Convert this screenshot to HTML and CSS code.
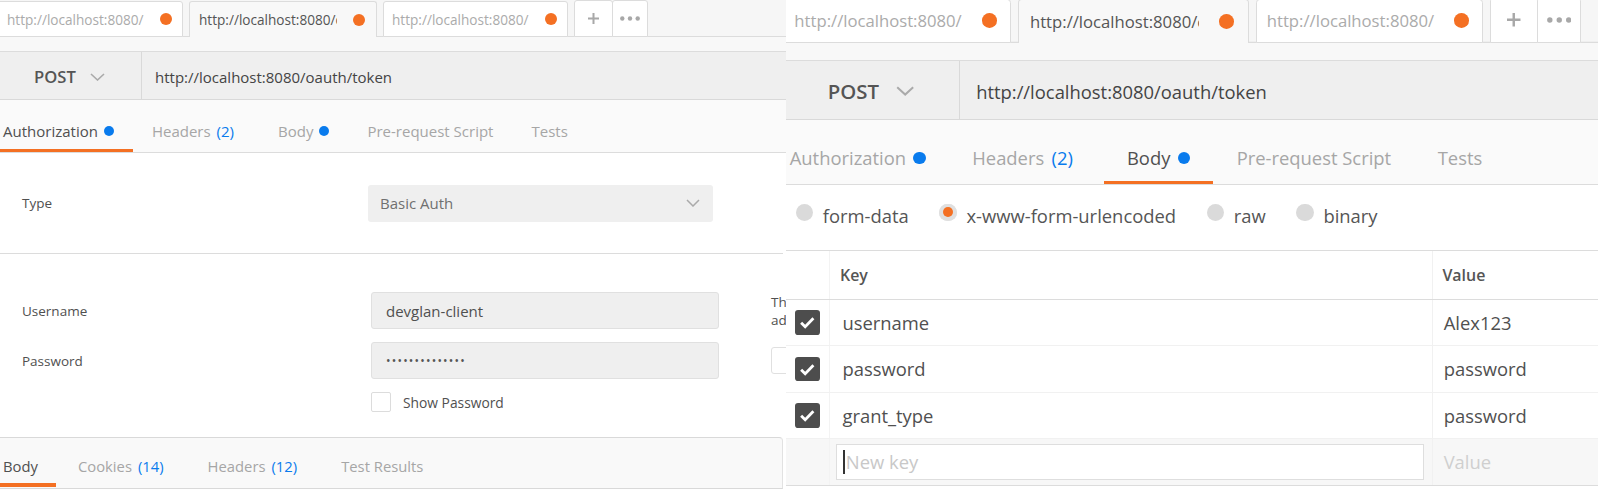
FILE: index.html
```html
<!DOCTYPE html>
<html>
<head>
<meta charset="utf-8">
<link rel="stylesheet" href="styles.css">
</head>
<body>
<div class="pm pm-left">
  <div class="tabbar">
    <div class="tab tab-first"><span class="tab-title">http://localhost:8080/</span><span class="tab-dot"></span></div>
    <div class="tab tab-active"><span class="tab-title">http://localhost:8080/oauth</span><span class="tab-dot"></span></div>
    <div class="tab tab-last"><span class="tab-title">http://localhost:8080/</span><span class="tab-dot"></span></div>
    <div class="tab-btn tab-plus"><svg width="11" height="11" viewBox="0 0 11 11"><path d="M5.5 0v11M0 5.5h11" stroke="#a8a8a8" stroke-width="2"/></svg></div>
    <div class="tab-btn tab-more"><svg width="20" height="5" viewBox="0 0 20 5"><circle cx="2.3" cy="2.5" r="2.2" fill="#a8a8a8"/><circle cx="10" cy="2.5" r="2.2" fill="#a8a8a8"/><circle cx="17.7" cy="2.5" r="2.2" fill="#a8a8a8"/></svg></div>
    <div class="tabbar-fill"></div>
  </div>
  <div class="band"></div>
  <div class="urlbar">
    <div class="method"><span class="method-name">POST</span><svg class="chev" width="15" height="8" viewBox="0 0 15 8"><path d="M1 1l6.5 6 6.5-6" fill="none" stroke="#aaa" stroke-width="1.6"/></svg></div>
    <div class="url">http://localhost:8080/oauth/token</div>
  </div>
  <div class="reqtabs">
    <div class="rt rt-first rt-active">Authorization<span class="bdot"></span></div>
    <div class="rt rt-headers">Headers<span class="count">(2)</span></div>
    <div class="rt">Body<span class="bdot"></span></div>
    <div class="rt">Pre-request Script</div>
    <div class="rt">Tests</div>
  </div>
  <div class="auth-type">
    <div class="lbl">Type</div>
    <div class="select">Basic Auth<svg class="chev" width="14" height="8" viewBox="0 0 14 8"><path d="M1 1l6 6 6-6" fill="none" stroke="#aaa" stroke-width="1.5"/></svg></div>
  </div>
  <div class="auth-fields">
    <div class="lbl">Username</div>
    <div class="input">devglan-client</div>
    <div class="help">Th<br>ad</div>
    <div class="lbl">Password</div>
    <div class="input input-pw">••••••••••••••</div>
    <div class="help"><span class="help-box"></span></div>
    <div></div>
    <div class="show-pw"><span class="cbox"></span>Show Password</div>
    <div></div>
  </div>
  <div class="resptabs">
    <div class="rs rs-first rs-active">Body</div>
    <div class="rs">Cookies<span class="count">(14)</span></div>
    <div class="rs">Headers<span class="count">(12)</span></div>
    <div class="rs">Test Results</div>
  </div>
</div>

<div class="pm pm-right">
  <div class="tabbar">
    <div class="tab tab-first"><span class="tab-title">http://localhost:8080/</span><span class="tab-dot"></span></div>
    <div class="tab tab-active"><span class="tab-title">http://localhost:8080/oauth</span><span class="tab-dot"></span></div>
    <div class="tab tab-last"><span class="tab-title">http://localhost:8080/</span><span class="tab-dot"></span></div>
    <div class="tab-btn tab-plus"><svg width="11" height="11" viewBox="0 0 11 11"><path d="M5.5 0v11M0 5.5h11" stroke="#a8a8a8" stroke-width="2"/></svg></div>
    <div class="tab-btn tab-more"><svg width="20" height="5" viewBox="0 0 20 5"><circle cx="2.3" cy="2.5" r="2.2" fill="#a8a8a8"/><circle cx="10" cy="2.5" r="2.2" fill="#a8a8a8"/><circle cx="17.7" cy="2.5" r="2.2" fill="#a8a8a8"/></svg></div>
    <div class="tabbar-fill"></div>
  </div>
  <div class="band"></div>
  <div class="urlbar">
    <div class="method"><span class="method-name">POST</span><svg class="chev" width="15" height="8" viewBox="0 0 15 8"><path d="M1 1l6.5 6 6.5-6" fill="none" stroke="#aaa" stroke-width="1.6"/></svg></div>
    <div class="url">http://localhost:8080/oauth/token</div>
  </div>
  <div class="reqtabs">
    <div class="rt rt-first">Authorization<span class="bdot"></span></div>
    <div class="rt rt-headers">Headers<span class="count">(2)</span></div>
    <div class="rt rt-active">Body<span class="bdot"></span></div>
    <div class="rt">Pre-request Script</div>
    <div class="rt">Tests</div>
  </div>
  <div class="modes">
    <div class="mode"><span class="radio"></span>form-data</div>
    <div class="mode"><span class="radio radio-on"></span>x-www-form-urlencoded</div>
    <div class="mode"><span class="radio"></span>raw</div>
    <div class="mode"><span class="radio"></span>binary</div>
  </div>
  <div class="kv">
    <div class="kv-row kv-head">
      <div class="kv-chk"></div>
      <div class="kv-key">Key</div>
      <div class="kv-val">Value</div>
    </div>
    <div class="kv-row">
      <div class="kv-chk"><span class="chk"><svg width="20" height="20" viewBox="0 0 20 20"><path d="M5 10.3l3.3 3.3L15 6.8" fill="none" stroke="#fff" stroke-width="2.3"/></svg></span></div>
      <div class="kv-key">username</div>
      <div class="kv-val">Alex123</div>
    </div>
    <div class="kv-row">
      <div class="kv-chk"><span class="chk"><svg width="20" height="20" viewBox="0 0 20 20"><path d="M5 10.3l3.3 3.3L15 6.8" fill="none" stroke="#fff" stroke-width="2.3"/></svg></span></div>
      <div class="kv-key">password</div>
      <div class="kv-val">password</div>
    </div>
    <div class="kv-row">
      <div class="kv-chk"><span class="chk"><svg width="20" height="20" viewBox="0 0 20 20"><path d="M5 10.3l3.3 3.3L15 6.8" fill="none" stroke="#fff" stroke-width="2.3"/></svg></span></div>
      <div class="kv-key">grant_type</div>
      <div class="kv-val">password</div>
    </div>
    <div class="kv-row kv-new">
      <div class="kv-chk"></div>
      <div class="kv-key"><div class="new-input"><span class="caret"></span>New key</div></div>
      <div class="kv-val kv-ph">Value</div>
    </div>
  </div>
</div>
</body>
</html>
```

FILE: styles.css
```css
* { box-sizing: border-box; }
html, body { margin: 0; padding: 0; }
body {
  display: flex;
  width: 1598px;
  height: 491px;
  overflow: hidden;
  background: #fff;
  font-family: "Open Sans", "Liberation Sans", sans-serif;
  color: #505050;
}
.pm { flex: none; overflow: hidden; height: 491px; background: #fff; }
.pm-left { width: 786px; }
.pm-right { width: 662px; height: 403px; zoom: 1.227; margin-top: -2.1px; }

/* top tabs */
.tabbar {
  display: flex;
  height: 37px;
  background: #f6f6f6;
  box-shadow: inset 0 -1px 0 #dcdcdc;
}
.tab {
  flex: none;
  display: flex;
  align-items: center;
  width: 188px;
  height: 36px;
  margin-top: 1px;
  margin-right: 6px;
  padding: 0 10px 0 11px;
  background: #fff;
  border: 1px solid #dcdcdc;
  border-radius: 3px 3px 0 0;
}
.tab-first { margin-left: -5px; }
.tab-active { background: #f8f8f8; border-bottom: none; padding: 0 11px 0 9px; }
.tab-last { width: 185px; padding: 0 10px 0 8px; }
.tab-title {
  width: 137px;
  overflow: hidden;
  white-space: nowrap;
  font-size: 13.6px;
  color: #ababab;
  margin-right: 16px;
}
.tab-active .tab-title { width: 138px; margin-right: 16px; color: #555; }
.tab-dot {
  width: 12px; height: 12px;
  border-radius: 50%;
  background: #f47023;
}
.tab-btn {
  flex: none;
  height: 37px;
  display: flex;
  align-items: center;
  justify-content: center;
  background: #fff;
  border: 1px solid #dcdcdc;
  border-radius: 3px 3px 0 0;
}
.tab-plus { width: 39px; }
.tab-more { width: 36px; margin-left: -1px; }
.tabbar-fill { flex: 1; }

.band { height: 15px; background: #f8f8f8; border-bottom: 1px solid #dcdcdc; }

/* url bar */
.urlbar {
  display: flex;
  height: 48px;
  background: #efefef;
  border-bottom: 1px solid #d9d9d9;
}
.method {
  width: 142px;
  flex: none;
  display: flex;
  align-items: center;
  padding-left: 34px;
  padding-top: 2px;
  border-right: 1px solid #d9d9d9;
}
.method-name { font-size: 16.6px; font-weight: 600; color: #555; margin-right: 14px; }
.url { display: flex; align-items: center; padding-left: 13px; padding-top: 2px; font-size: 15px; color: #444; }

/* request tabs */
.reqtabs {
  display: flex;
  height: 53px;
  background: #fafafa;
  border-bottom: 1px solid #dcdcdc;
}
.rt {
  display: flex;
  align-items: center;
  padding: 12px 19px 0;
  font-size: 15px;
  color: #a6a6a6;
  border-bottom: 3px solid transparent;
}
.rt-first { padding-left: 3px; }
.rt-headers { padding-right: 25px; }
.rt-active { color: #505050; border-bottom-color: #f47023; }
.bdot { width: 10px; height: 10px; border-radius: 50%; background: #097bed; margin-left: 6px; }
.count { color: #097bed; margin-left: 6px; }

/* auth */
.lbl { font-size: 13.5px; color: #505050; }
.auth-type {
  display: flex;
  align-items: center;
  height: 101px;
  padding-left: 22px;
  border-bottom: 1px solid #dcdcdc;
  margin-right: 3px;
}
.auth-type .lbl { width: 346px; }
.select {
  width: 345px;
  height: 37px;
  display: flex;
  align-items: center;
  justify-content: space-between;
  padding: 0 13px 0 12px;
  background: #efefef;
  border-radius: 3px;
  font-size: 15px;
  color: #707070;
}
.auth-fields {
  display: grid;
  grid-template-columns: 297px 348px 1fr;
  grid-template-rows: 37px 37px 20px;
  column-gap: 52px;
  row-gap: 13px;
  align-items: center;
  padding: 38px 0 25px 22px;
}
.input {
  height: 100%;
  display: flex;
  align-items: center;
  padding-left: 14px;
  background: #efefef;
  border: 1px solid #e0e0e0;
  border-radius: 3px;
  font-size: 15px;
  color: #505050;
}
.input-pw { font-size: 12px; letter-spacing: 1.2px; color: #555; }
.help { font-size: 13.5px; line-height: 18px; color: #505050; white-space: nowrap; }
.help-box { display: block; width: 30px; height: 27px; border: 1px solid #e0e0e0; border-radius: 3px; }
.show-pw { display: flex; align-items: center; font-size: 13.8px; color: #505050; }
.cbox { width: 20px; height: 20px; border: 1px solid #dcdcdc; border-radius: 2px; background: #fff; margin-right: 12px; }

/* response tabs */
.resptabs {
  display: flex;
  height: 52px;
  background: #f9f9f9;
  border-top: 1px solid #d9d9d9;
  border-bottom: 1px solid #d9d9d9;
  margin-right: 3px;
  border-right: 1px solid #e2e2e2;
  border-radius: 0 4px 0 0;
}
.rs {
  display: flex;
  align-items: center;
  padding: 10px 22px 0;
  font-size: 14.8px;
  color: #a6a6a6;
  border-bottom: 4px solid transparent;
  margin-bottom: 1px;
}
.rs-first { padding: 10px 18px 0 3px; }
.rs-active { color: #505050; border-bottom-color: #f47023; }

/* body modes (right) */
.modes {
  display: flex;
  align-items: center;
  height: 54px;
  padding-left: 8px;
  padding-bottom: 3px;
  border-bottom: 1px solid #dcdcdc;
}
.mode { display: flex; align-items: center; margin-right: 25px; font-size: 15px; color: #555; }
.radio {
  width: 14px; height: 14px;
  border-radius: 50%;
  background: #dadada;
  margin-right: 8px;
  position: relative;
  top: -3px;
}
.radio-on { background: #e2e2e2; box-shadow: inset 0 0 0 3px #e0e0e0; }
.radio-on::after {
  content: "";
  position: absolute;
  left: 3px; top: 3px;
  width: 8px; height: 8px;
  border-radius: 50%;
  background: #f47023;
}

/* key-value table */
.kv-row { display: flex; height: 37.8px; border-bottom: 1px solid #f1f1f1; }
.kv-head { height: 39.5px; border-bottom: 1px solid #dcdcdc; }
.kv-chk {
  width: 36px; flex: none;
  display: flex; align-items: center; justify-content: center;
  border-right: 1px solid #f3f3f3;
}
.kv-key {
  width: 491px; flex: none;
  display: flex; align-items: center;
  padding-left: 10px;
  border-right: 1px solid #f1f1f1;
  font-size: 15px; color: #505050;
}
.kv-val { flex: 1; display: flex; align-items: center; padding-left: 9px; font-size: 15px; color: #505050; }
.kv-head .kv-key, .kv-head .kv-val { font-size: 13px; font-weight: 600; color: #555; padding-left: 8px; }
.chk {
  width: 20px; height: 20px;
  border-radius: 2.5px;
  background: #4d4d4d;
  display: flex;
}
.kv-new { height: 38.3px; background: #f7f7f7; border-bottom: 1px solid #dcdcdc; }
.kv-new .kv-key { padding-left: 5px; padding-right: 6px; }
.new-input {
  width: 100%;
  height: 30px;
  display: flex;
  align-items: center;
  padding-left: 5px;
  background: #fff;
  border: 1.5px solid #dedede;
  font-size: 15px;
  color: #c8c8c8;
}
.caret { width: 1px; height: 19px; background: #333; margin-right: 1px; }
.kv-ph { color: #cfcfcf; }
```
